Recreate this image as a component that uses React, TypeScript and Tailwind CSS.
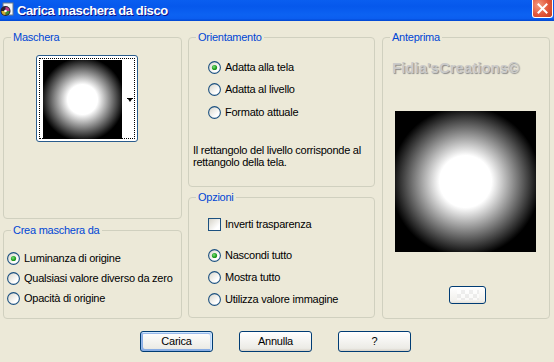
import React from "react";

const FONT = "font-['Liberation_Sans',Arial,sans-serif]";

function Radio({ checked }: { checked?: boolean }) {
  return (
    <svg width="13" height="13" viewBox="0 0 13 13" className="shrink-0">
      <defs>
        <linearGradient id="rg" x1="0" y1="0" x2="1" y2="1">
          <stop offset="0" stopColor="#d6d3c8" />
          <stop offset="0.7" stopColor="#ffffff" />
          <stop offset="1" stopColor="#ffffff" />
        </linearGradient>
        <radialGradient id="dot" cx="0.4" cy="0.4" r="0.7">
          <stop offset="0" stopColor="#7fe07f" />
          <stop offset="0.6" stopColor="#21a121" />
          <stop offset="1" stopColor="#1a8a1a" />
        </radialGradient>
      </defs>
      <circle cx="6.5" cy="6.5" r="5.9" fill="url(#rg)" stroke="#1c5180" strokeWidth="1.1" />
      {checked && <circle cx="6.5" cy="6.5" r="2.6" fill="url(#dot)" />}
    </svg>
  );
}

function Checkbox() {
  return (
    <div className="w-[13px] h-[13px] shrink-0 border border-[#1c5180] bg-[linear-gradient(135deg,#d6d3c8,#ffffff_75%)]" />
  );
}

function Group({
  label,
  className,
  children,
}: {
  label: string;
  className?: string;
  children?: React.ReactNode;
}) {
  return (
    <div className={`relative border border-[#d0d0bf] rounded-[4px] ${className ?? ""}`}>
      <span className="absolute left-[7px] top-[-7px] px-[2px] bg-[#ece9d8] text-[#0046d5] leading-[13px]">
        {label}
      </span>
      {children}
    </div>
  );
}

function Row({ checked, children, h = "h-[20px]" }: { checked?: boolean; children: React.ReactNode; h?: string }) {
  return (
    <div className={`flex items-center gap-[4px] ${h}`}>
      <Radio checked={checked} />
      <span className="leading-[13px]">{children}</span>
    </div>
  );
}

function XPButton({ children, def }: { children: React.ReactNode; def?: boolean }) {
  return (
    <div
      className={`w-[73px] h-[21px] flex items-center justify-center rounded-[3px] border border-[#003c74] bg-[linear-gradient(180deg,#ffffff,#ecebe6_86%,#d6d0c5)] ${
        def
          ? "shadow-[inset_-1px_1px_#cee7ff,inset_1px_2px_#98b8ea,inset_-2px_2px_#bcd4f6,inset_1px_-1px_#89ade4,inset_2px_-2px_#89ade4]"
          : ""
      }`}
    >
      {children}
    </div>
  );
}

export default function App() {
  return (
    <div className={`w-[554px] h-[362px] overflow-hidden bg-[#ece9d8] text-[11px] tracking-[-0.25px] text-black ${FONT} flex flex-col`}>
      {/* Title bar */}
      <div className="h-[21px] shrink-0 flex items-start bg-[linear-gradient(180deg,#0a5ef0_0%,#0658ec_30%,#0c62f2_70%,#0b5ef0_88%,#0046d0_100%)]">
        <svg width="14" height="16" viewBox="0 0 14 16" className="mt-[2px] shrink-0">
          <rect x="3" y="1" width="10" height="12" fill="#f4f4f4" stroke="#6a7a8a" strokeWidth="1" />
          <circle cx="5.5" cy="9" r="5" fill="#2a2030" />
          <path d="M5.5 5 A4 4 0 0 1 9.5 9 L5.5 9 Z" fill="#c03a8a" />
          <path d="M5.5 9 L9.5 9 A4 4 0 0 1 5.5 13 Z" fill="#3a8a3a" />
          <path d="M5.5 9 L5.5 13 A4 4 0 0 1 1.5 9 Z" fill="#d0b030" />
          <circle cx="5.5" cy="9" r="1.3" fill="#ffffff" />
        </svg>
        <span className="ml-[3px] mt-[3px] text-white font-bold text-[13px] leading-[15px] tracking-[-0.4px] [text-shadow:1px_1px_0_#0f1089]">
          Carica maschera da disco
        </span>
        <div className="ml-auto mr-[1px] w-[21px] h-[18px] rounded-b-[3px] border border-t-0 border-white bg-[radial-gradient(circle_at_30%_30%,#f39b80,#e2553a_55%,#c43c1c)] flex items-center justify-center">
          <svg width="11" height="11" viewBox="0 0 11 11">
            <path d="M1.5 1.5 L9.5 9.5 M9.5 1.5 L1.5 9.5" stroke="#ffffff" strokeWidth="2" strokeLinecap="square" />
          </svg>
        </div>
      </div>

      {/* Body */}
      <div className="flex pl-[3px] pt-[16px]">
        {/* Left column */}
        <div className="w-[179px] flex flex-col gap-[11px]">
          <Group label="Maschera" className="h-[182px]">
            <div className="ml-[32px] mt-[17px] w-[102px] h-[87px] rounded-[3px] border border-[#2a5c8c] bg-white p-[2px]">
              <div className="w-full h-full border border-dotted border-black flex pl-[3px] pt-[1px]">
                <div className="w-[79px] h-[79px] bg-[radial-gradient(circle_at_center,#ffffff_0,#ffffff_15px,#000000_42px)]" />
                <div className="flex-1 flex items-center justify-end pr-[1px] pt-[2px]">
                  <svg width="6" height="4" viewBox="0 0 6 4">
                    <path d="M0 0 H6 V1 H5 L3 4 L1 1 H0 Z" fill="#000" />
                  </svg>
                </div>
              </div>
            </div>
          </Group>
          <Group label="Crea maschera da" className="h-[89px] pl-[3px] pt-[17px]">
            <Row checked>Luminanza di origine</Row>
            <Row>Qualsiasi valore diverso da zero</Row>
            <Row>Opacità di origine</Row>
          </Group>
        </div>

        {/* Middle column */}
        <div className="ml-[6px] w-[187px] flex flex-col gap-[10px]">
          <Group label="Orientamento" className="h-[150px] pt-[18px]">
            <div className="pl-[19px]">
              <Row checked h="h-[22.5px]">Adatta alla tela</Row>
              <Row h="h-[22.5px]">Adatta al livello</Row>
              <Row h="h-[22.5px]">Formato attuale</Row>
            </div>
            <p className="pl-[4px] mt-[20px] leading-[12.5px]">
              Il rettangolo del livello corrisponde al
              <br />
              rettangolo della tela.
            </p>
          </Group>
          <Group label="Opzioni" className="h-[121px] pl-[19px] pt-[20px]">
            <div className="flex items-center gap-[4px] h-[13px]">
              <Checkbox />
              <span>Inverti trasparenza</span>
            </div>
            <div className="mt-[13px]">
              <Row checked h="h-[22px]">Nascondi tutto</Row>
              <Row h="h-[22px]">Mostra tutto</Row>
              <Row h="h-[22px]">Utilizza valore immagine</Row>
            </div>
          </Group>
        </div>

        {/* Right column */}
        <div className="ml-[7px] w-[168px]">
          <Group label="Anteprima" className="h-[282px] flex flex-col">
            <div className="ml-[9px] mt-[22px] h-[16px] text-[15px] leading-[16px] tracking-normal font-bold text-[#cacaca] [text-shadow:1px_1px_1px_#8c8c8c]">
              Fidia&apos;sCreations©
            </div>
            <div className="ml-[12px] mt-[35px] w-[141px] h-[141px] bg-[radial-gradient(circle_at_center,#ffffff_0,#ffffff_26px,#000000_75px)]" />
            <div className="ml-[66px] mt-[34px] w-[37px] h-[18px] rounded-[3px] border border-[#003c74] bg-[linear-gradient(180deg,#ffffff,#f1f0ec_86%,#e4e0d8)] flex items-center justify-center">
              <div className="w-[22px] h-[10px] opacity-60 bg-[conic-gradient(#e6e6e6_25%,#ffffff_0_50%,#e6e6e6_0_75%,#ffffff_0)] bg-[length:8px_8px]" />
            </div>
          </Group>
        </div>
      </div>

      {/* Buttons */}
      <div className="flex gap-[26px] pl-[140px] mt-[12px]">
        <XPButton def>Carica</XPButton>
        <XPButton>Annulla</XPButton>
        <XPButton>?</XPButton>
      </div>
    </div>
  );
}
